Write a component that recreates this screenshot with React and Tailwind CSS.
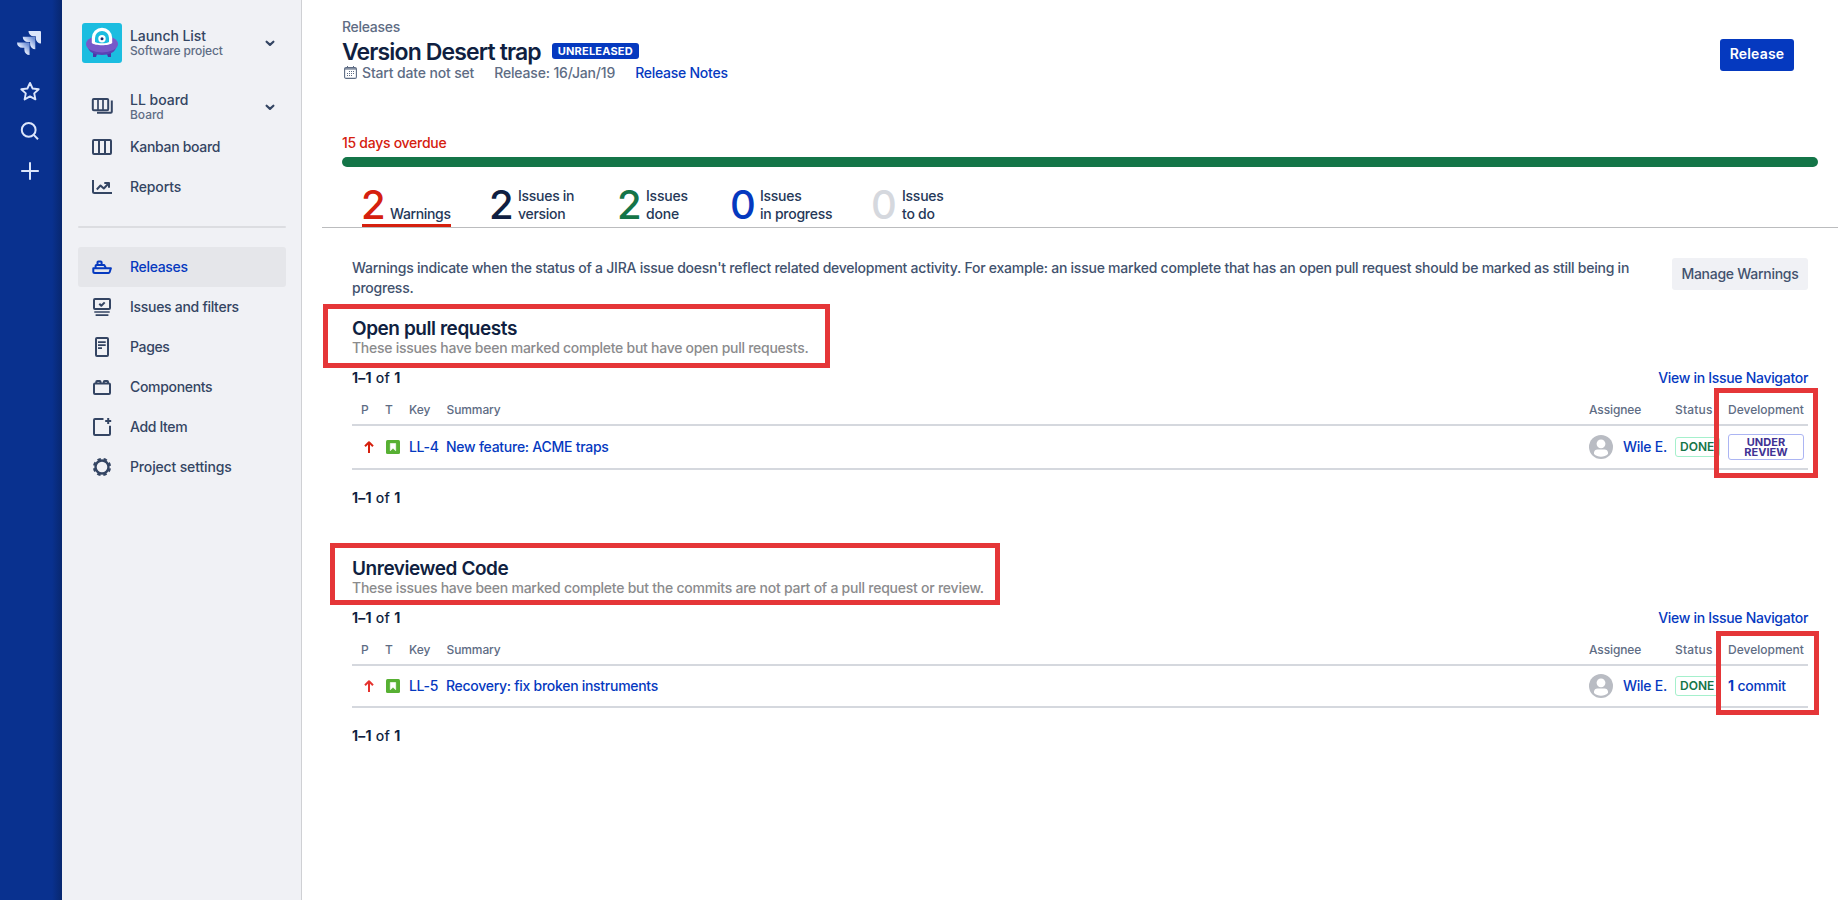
import React from "react";

function Svg({ children, className = "size-6", viewBox = "0 0 24 24", strokeWidth = 2 }) {
  return (
    <svg
      viewBox={viewBox}
      className={`${className} shrink-0`}
      fill="none"
      stroke="currentColor"
      strokeWidth={strokeWidth}
      strokeLinejoin="round"
    >
      {children}
    </svg>
  );
}

const icons = {
  boards: (
    <Svg>
      <rect x="2.8" y="4" width="15.4" height="11.3" rx="1" />
      <path d="M8 4v11M13 4v11" strokeWidth="1.7" />
      <path d="M21.8 5.5v11.3a1 1 0 0 1-1 1H7" />
    </Svg>
  ),
  kanban: (
    <Svg>
      <rect x="3" y="5" width="18" height="14" rx="1" />
      <path d="M9 5v14M15 5v14" />
    </Svg>
  ),
  reports: (
    <Svg>
      <path d="M3 5v11.5A1.5 1.5 0 0 0 4.500 18H22" />
      <path d="M6.800 14.500l3.700-4 3.300 3 4.700-5" />
      <path d="M14.300 8h4.700v4.700" />
    </Svg>
  ),
  releases: (
    <Svg>
      <path d="M3.300 13.300h17.600l-1.300 3.900a1.200 1.200 0 0 1-1.100.8H4.800a1.500 1.500 0 0 1-1.500-1.500z" />
      <path d="M5.600 13v-2.300a.8.8 0 0 1 .8-.8h7.800l1.700 3" />
      <path d="M7.500 9.500V7.300a.8.8 0 0 1 .8-.8h2.500a.8.8 0 0 1 .8.8v2.200" />
    </Svg>
  ),
  issues: (
    <Svg>
      <rect x="4" y="4" width="16" height="10" rx="1" />
      <path d="M9.300 8.800l2 2 3.400-3.400" />
      <path d="M4.300 17h15.400M5.600 20.100h12.800" strokeWidth="1.700" />
    </Svg>
  ),
  pages: (
    <Svg>
      <rect x="6" y="3" width="12" height="18" rx="1" />
      <path d="M8 7.200h7.700M8 10.200h7.700M8 13.200h4" strokeWidth="1.700" />
    </Svg>
  ),
  components: (
    <Svg>
      <rect x="4" y="8.500" width="16" height="10.500" rx="1" />
      <path d="M6.300 8V6.800a.8.8 0 0 1 .8-.8h2.600a.8.8 0 0 1 .8.8V8M13.800 8V6.800a.8.8 0 0 1 .8-.8h2.600a.8.8 0 0 1 .8.8V8" />
    </Svg>
  ),
  add: (
    <Svg>
      <path d="M13.500 4H5a1 1 0 0 0-1 1v14a1 1 0 0 0 1 1h14a1 1 0 0 0 1-1v-8.300" />
      <path d="M18.200 3v6M15.200 6h6" />
    </Svg>
  ),
  settings: (
    <Svg>
      <circle cx="12" cy="12" r="6.500" strokeWidth="2.400" />
      <circle cx="12" cy="12" r="8.100" strokeDasharray="3.500 2.862" strokeDashoffset="-1.400" />
    </Svg>
  ),
};

function Chevron() {
  return (
    <Svg className="ml-auto size-3" viewBox="0 0 12 12" strokeWidth={2.2}>
      <path d="M2.600 4.700L6 7.900l3.400-3.200" strokeLinecap="round" />
    </Svg>
  );
}

function NavItem({ icon, label, tracking, active }) {
  return (
    <a
      className={`flex h-10 items-center gap-4 rounded-[3px] pl-3 text-sm ${
        active ? "bg-[#e5e6ea] text-[#0539bf]" : ""
      }`}
    >
      {icons[icon]}
      <span className={tracking}>{label}</span>
    </a>
  );
}

function Rail() {
  return (
    <aside className="flex h-[900px] w-[62px] shrink-0 bg-[#09318f]">
      <div className="flex w-[52px] flex-col items-center pl-2 pt-[31px] text-[#dce6fb]">
        <svg viewBox="0 0 24 24" className="-ml-0.5 size-6 shrink-0">
          <defs>
            <linearGradient id="fade" x1="1" y1="0" x2="0" y2="1">
              <stop offset="0.150" stopColor="#6f8fd4" />
              <stop offset="0.550" stopColor="#dce6fb" />
            </linearGradient>
          </defs>
          <path
            fill="url(#fade)"
            d="M11.571 11.513H0a5.218 5.218 0 0 0 5.232 5.215h2.130v2.057A5.215 5.215 0 0 0 12.575 24V12.518a1.005 1.005 0 0 0-1.005-1.005z"
          />
          <path
            fill="url(#fade)"
            d="M17.294 5.757H5.736a5.215 5.215 0 0 0 5.215 5.214h2.129v2.058a5.218 5.218 0 0 0 5.215 5.214V6.758a1.001 1.001 0 0 0-1.001-1.001z"
          />
          <path
            fill="#dce6fb"
            d="M23.013 0H11.455a5.215 5.215 0 0 0 5.215 5.215h2.129v2.057A5.215 5.215 0 0 0 24 12.483V1.005A1.005 1.005 0 0 0 23.013 0Z"
          />
        </svg>
        <Svg className="mt-6 size-6" strokeWidth={1.9}>
          <path d="M12 3.900l2.600 5.600 6.100.7-4.500 4.200 1.200 6-5.400-3-5.400 3 1.200-6-4.500-4.200 6.100-.7z" />
        </Svg>
        <Svg className="mt-4 size-6" strokeWidth={2}>
          <circle cx="10.700" cy="10.900" r="6.900" />
          <path d="M15.700 15.900l4.300 4.300" />
        </Svg>
        <Svg className="mt-4 size-6" strokeWidth={2}>
          <path d="M12 3.200v17.600M3.200 12h17.600" />
        </Svg>
      </div>
      <div className="w-[10px] bg-linear-to-r from-[#09318f] to-[#08276f]" />
    </aside>
  );
}

function Sidebar() {
  return (
    <nav className="flex h-[900px] w-60 shrink-0 flex-col border-r border-[#cfd0d4] bg-[#f0f1f5] pl-4 pr-[15px] pt-[23px] text-[#344563]">
      <div className="flex h-10 items-center pl-1 pr-2.5">
        <svg viewBox="0 0 40 40" className="size-10 shrink-0 rounded-[3px] bg-[#1bbde0]">
          <path d="M11 26h18v8h-3l-1-3H15l-1 3h-3z" fill="#4a35a8" />
          <ellipse cx="20" cy="24" rx="14" ry="8" fill="#5a43b5" />
          <ellipse cx="20" cy="21" rx="16" ry="8.500" fill="#7759c9" />
          <path d="M9.800 20V15a10.200 10.200 0 0 1 20.400 0v5c-3 3-17.400 3-20.400 0z" fill="#fff" />
          <path d="M13 19v-4a7 7 0 0 1 14 0v4c-2 1.800-12 1.800-14 0z" fill="#1bbde0" />
          <circle cx="20" cy="15.700" r="3.700" fill="#fff" />
          <circle cx="20" cy="15.700" r="1.500" fill="#1a2a6c" />
        </svg>
        <div className="-mt-0.5 ml-2">
          <div className="text-sm leading-[17px] font-medium tracking-[-0.080px]">Launch List</div>
          <div className="text-xs leading-[14px] tracking-[-0.140px] text-[#5e6c84]">Software project</div>
        </div>
        <Chevron />
      </div>
      <div className="mt-6 flex h-10 items-center pl-3 pr-2.5">
        {icons.boards}
        <div className="-mt-0.5 ml-4">
          <div className="text-sm leading-[17px] font-medium tracking-[-0.020px]">LL board</div>
          <div className="text-xs leading-[14px] tracking-[-0.060px] text-[#5e6c84]">Board</div>
        </div>
        <Chevron />
      </div>
      <NavItem icon="kanban" label="Kanban board" tracking="tracking-[-0.310px]" />
      <NavItem icon="reports" label="Reports" tracking="tracking-[-0.140px]" />
      <div className="mt-[19px] h-0.5 shrink-0 rounded-full bg-[#dcdde1]" />
      <div className="mt-[19px]">
        <NavItem icon="releases" label="Releases" tracking="tracking-[-0.330px]" active />
        <NavItem icon="issues" label="Issues and filters" tracking="tracking-[-0.290px]" />
        <NavItem icon="pages" label="Pages" tracking="tracking-[-0.360px]" />
        <NavItem icon="components" label="Components" tracking="tracking-[-0.320px]" />
        <NavItem icon="add" label="Add Item" tracking="tracking-[-0.360px]" />
        <NavItem icon="settings" label="Project settings" tracking="tracking-[-0.150px]" />
      </div>
    </nav>
  );
}

const tabs = [
  { n: "2", l1: "Warnings", color: "text-[#d5200e]", item: "w-[128px]", digit: "w-[29px]", t1: "tracking-[-0.350px]", active: true },
  { n: "2", l1: "Issues in", l2: "version", color: "text-[#101f41]", item: "w-[128px]", digit: "w-[29px]", t1: "tracking-[-0.280px]" },
  { n: "2", l1: "Issues", l2: "done", color: "text-[#147548]", item: "w-[113px]", digit: "w-[29px]", t1: "tracking-[-0.200px]" },
  { n: "0", l1: "Issues", l2: "in progress", color: "text-[#0539bf]", item: "w-[141px]", digit: "w-[30px]", t1: "tracking-[-0.260px]" },
  { n: "0", l1: "Issues", l2: "to do", color: "text-[#d5d8de]", item: "w-[114px]", digit: "w-[31px]", t1: "tracking-[-0.240px]" },
];

function Tabs() {
  return (
    <div className="ml-5 mr-0.5 flex h-[61px] border-b border-[#bbbcbe] pl-[39px] pt-5">
      {tabs.map((t, i) => (
        <div key={i} className={`${t.item} shrink-0`}>
          <div className="flex h-9 items-end">
            <span className={`${t.digit} ${t.color} shrink-0 text-[40px] leading-9 font-[450]`}>{t.n}</span>
            <span className={`${t.t1} text-sm leading-[18px] whitespace-nowrap text-[#253858]`}>
              {t.l1}
              {t.l2 && <br />}
              {t.l2}
            </span>
          </div>
          {t.active && <div className="ml-px mt-px h-[3px] w-[89px] bg-[#d5200e]" />}
        </div>
      ))}
    </div>
  );
}

function Count() {
  return (
    <span className="text-sm leading-5 tracking-[0.260px] text-[#101f41]">
      <b className="font-[650]">1–1</b> of <b className="font-[650]">1</b>
    </span>
  );
}

const cols = "grid grid-cols-[33px_23px_38px_1fr_86px_53px_80px]";

function Section({ title, titleTracking, note, noteTracking, issueKey, summary, summaryTracking, arrow, rowHeight, dev, titleBox, devBox }) {
  return (
    <section className="relative ml-[50px] mr-8">
      <h2 className={`${titleTracking} h-[22px] pt-px text-[19px] leading-6 font-[560] text-[#101f41]`}>{title}</h2>
      <p className={`${noteTracking} text-sm leading-5 text-[#8b8b8d]`}>{note}</p>
      <div className="mt-2.5 flex h-5 items-center justify-between">
        <Count />
        <a className="text-sm leading-5 tracking-[-0.300px] text-[#0539bf]">View in Issue Navigator</a>
      </div>
      <div className={`${cols} mt-[11px] h-[27px] border-b-2 border-[#d5d8de] text-xs leading-[21px] font-medium text-[#5e6c84]`}>
        <span className="pl-[9px]">P</span>
        <span>T</span>
        <span className="pl-px">Key</span>
        <span className="pl-[0.5px] tracking-[-0.100px]">Summary</span>
        <span className="tracking-[-0.120px]">Assignee</span>
        <span className="tracking-[0.180px]">Status</span>
        <span>Development</span>
      </div>
      <div className={`${cols} ${rowHeight} items-center border-b-2 border-[#d5d8de] text-sm text-[#0539bf]`}>
        <svg viewBox="0 0 10 12" className={`${arrow} ml-3 h-3 w-2.5`} fill="none" stroke="currentColor" strokeWidth="2">
          <path d="M5 12V1.500M1 5.300l4-4 4 4" strokeLinejoin="round" />
        </svg>
        <svg viewBox="0 0 14 14" className="ml-px size-3.5">
          <rect width="14" height="14" rx="1.500" fill="#57b033" />
          <path d="M4.300 3.500h5.400v7.200L7 8.300l-2.700 2.400z" fill="#fff" stroke="#fff" strokeWidth=".6" strokeLinejoin="round" />
        </svg>
        <span className="pl-px tracking-[-0.300px]">{issueKey}</span>
        <span className={summaryTracking}>{summary}</span>
        <span className="flex items-center gap-2.5 whitespace-nowrap">
          <svg viewBox="0 0 24 24" className="size-6 shrink-0">
            <circle cx="12" cy="12" r="12" fill="#b9bcc3" />
            <circle cx="12" cy="8.800" r="4.400" fill="#fff" />
            <path d="M5 19v-1.500A3.500 3.500 0 0 1 8.500 14.500h7a3.500 3.500 0 0 1 3.500 3V19c-3.500 3.500-10.500 3.500-14 0z" fill="#fff" />
          </svg>
          <span className="tracking-[-0.260px]">Wile E.</span>
        </span>
        <span className="flex h-5 w-[45px] items-center rounded-[3px] border border-[#a5f0cc] pl-1 text-xs font-semibold text-[#147548]">
          DONE
        </span>
        {dev}
      </div>
      <div className="mb-[3px] mt-[15px] h-5">
        <Count />
      </div>
      <div className={`${titleBox} absolute border-[5px] border-[#e53638]`} />
      <div className={`${devBox} absolute border-[5px] border-[#e53638]`} />
    </section>
  );
}

export default function App() {
  return (
    <div className="flex h-[900px] w-[1840px] overflow-hidden bg-white font-['Inter',sans-serif] font-[450]">
      <Rail />
      <Sidebar />
      <main className="flex-1 pt-[17px]">
        <header className="flex h-[116px] items-start justify-between pl-10 pr-[46px]">
          <div>
            <div className="text-sm leading-5 tracking-[-0.280px] text-[#5e6c84]">Releases</div>
            <div className="mt-0.5 flex h-6 items-center">
              <h1 className="mt-0.5 text-[23px] leading-6 font-[560] tracking-[-0.860px] text-[#101f41]">Version Desert trap</h1>
              <span className="ml-[11px] flex h-4 w-[87px] items-center justify-center rounded-[3px] bg-[#0539bf] text-[11px] font-bold tracking-[0.200px] text-white">
                UNRELEASED
              </span>
            </div>
            <div className="flex h-5 items-center text-sm text-[#5e6c84]">
              <svg viewBox="0 0 13 13" className="mb-0.5 ml-0.5 size-[13px]" fill="none" stroke="currentColor">
                <rect x=".6" y="1.500" width="11.800" height="10.900" rx="1.500" strokeWidth="1.100" />
                <path d="M.6 2.900h11.800" strokeWidth="1.300" />
                <path d="M3.500 0v2M9.500 0v2" />
                <path d="M5 5.500h6M3 7.500h8M3 9.500h5" strokeDasharray="1 1" />
              </svg>
              <span className="ml-[5px] tracking-[-0.160px]">Start date not set</span>
              <span className="ml-5 tracking-[-0.160px]">Release: 16/Jan/19</span>
              <a className="ml-5 tracking-[-0.260px] text-[#0539bf]">Release Notes</a>
            </div>
          </div>
          <button className="mt-[22px] flex h-8 w-[74px] items-center justify-center rounded-[3px] bg-[#0539bf] text-sm font-semibold tracking-[0.200px] text-white">
            <span className="-mt-0.5">Release</span>
          </button>
        </header>
        <div className="ml-10 mr-[22px]">
          <div className="text-sm leading-5 tracking-[-0.280px] text-[#d5200e]">15 days overdue</div>
          <div className="mt-1 h-2.5 rounded-full bg-[#147548]" />
        </div>
        <Tabs />
        <div className="mb-[18px] ml-[50px] mr-8 mt-[30px] flex h-10 items-start justify-between">
          <p className="w-[1290px] text-sm leading-5 tracking-[-0.239px] text-[#42526e]">
            Warnings indicate when the status of a JIRA issue doesn't reflect related development activity. For example: an issue marked complete that has an open pull request should be marked as still being in progress.
          </p>
          <button className="flex h-8 w-[136px] items-center justify-center rounded-[3px] bg-[#f0f1f5] text-sm tracking-[-0.270px] text-[#42526e]">
            Manage Warnings
          </button>
        </div>
        <Section
          title="Open pull requests"
          titleTracking="tracking-[-0.440px]"
          note="These issues have been marked complete but have open pull requests."
          noteTracking="tracking-[-0.270px]"
          issueKey="LL-4"
          summary="New feature: ACME traps"
          summaryTracking="tracking-[-0.260px]"
          arrow="text-[#d5200e]"
          rowHeight="h-11"
          titleBox="-left-[29.5px] -top-3 h-16 w-[507px]"
          devBox="-right-2.5 top-[72px] h-[90px] w-[104px]"
          dev={
            <span className="flex h-[26px] w-[76px] items-center justify-center rounded-[3px] border border-[#acb5f3] text-center text-[11px] leading-[10px] font-bold tracking-[0.050px] text-[#403294]">
              UNDER
              <br />
              REVIEW
            </span>
          }
        />
        <div className="h-12" />
        <Section
          title="Unreviewed Code"
          titleTracking="tracking-[-0.440px]"
          note="These issues have been marked complete but the commits are not part of a pull request or review."
          noteTracking="tracking-[-0.240px]"
          issueKey="LL-5"
          summary="Recovery: fix broken instruments"
          summaryTracking="tracking-[-0.280px]"
          arrow="text-[#e5332f]"
          rowHeight="h-[42px]"
          titleBox="-left-[22px] -top-[13px] h-[62px] w-[670px]"
          devBox="-right-[11px] top-[75px] h-[84px] w-[103px]"
          dev={
            <span className="tracking-[-0.200px]">
              <b className="font-bold">1</b> commit
            </span>
          }
        />
      </main>
    </div>
  );
}
